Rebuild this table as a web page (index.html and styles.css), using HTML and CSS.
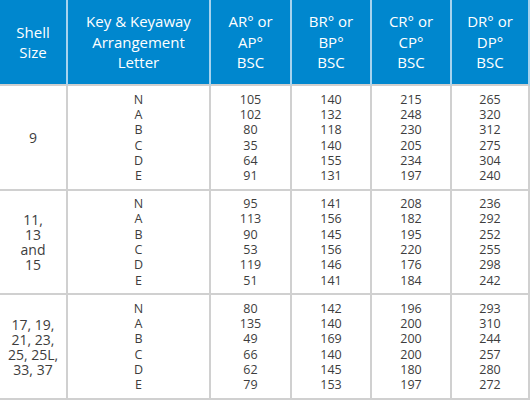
FILE: index.html
```html
<!DOCTYPE html>
<html>
<head>
<meta charset="utf-8">
<link rel="stylesheet" href="styles.css">
</head>
<body>
<div class="table">
  <div class="cell head">Shell<br>Size</div>
  <div class="cell head">Key &amp; Keyaway<br>Arrangement<br>Letter</div>
  <div class="cell head">AR° or<br>AP°<br>BSC</div>
  <div class="cell head">BR° or<br>BP°<br>BSC</div>
  <div class="cell head">CR° or<br>CP°<br>BSC</div>
  <div class="cell head">DR° or<br>DP°<br>BSC</div>

  <div class="cell shell">9</div>
  <div class="cell list">N<br>A<br>B<br>C<br>D<br>E</div>
  <div class="cell list">105<br>102<br>80<br>35<br>64<br>91</div>
  <div class="cell list">140<br>132<br>118<br>140<br>155<br>131</div>
  <div class="cell list">215<br>248<br>230<br>205<br>234<br>197</div>
  <div class="cell list">265<br>320<br>312<br>275<br>304<br>240</div>

  <div class="cell shell">11,<br>13<br>and<br>15</div>
  <div class="cell list">N<br>A<br>B<br>C<br>D<br>E</div>
  <div class="cell list">95<br>113<br>90<br>53<br>119<br>51</div>
  <div class="cell list">141<br>156<br>145<br>156<br>146<br>141</div>
  <div class="cell list">208<br>182<br>195<br>220<br>176<br>184</div>
  <div class="cell list">236<br>292<br>252<br>255<br>298<br>242</div>

  <div class="cell shell">17, 19,<br>21, 23,<br>25, 25L,<br>33, 37</div>
  <div class="cell list">N<br>A<br>B<br>C<br>D<br>E</div>
  <div class="cell list">80<br>135<br>49<br>66<br>62<br>79</div>
  <div class="cell list">142<br>140<br>169<br>140<br>145<br>153</div>
  <div class="cell list">196<br>200<br>200<br>200<br>180<br>197</div>
  <div class="cell list">293<br>310<br>244<br>257<br>280<br>272</div>
</div>
</body>
</html>
```

FILE: styles.css
```css
html, body {
  margin: 0;
  padding: 0;
  background: #ffffff;
}

body {
  font-family: "Open Sans", "Liberation Sans", sans-serif;
  color: #3d3d3d;
  width: 530px;
  height: 400px;
  overflow: hidden;
}

.table {
  display: grid;
  grid-template-columns: 68px 143px 81px 80px 80px 78px;
  grid-template-rows: 86px 105px 104px 105px;
}

.cell {
  box-sizing: border-box;
  border-right: 2px solid #d0d0d0;
  border-bottom: 2px solid #d0d0d0;
  display: flex;
  align-items: center;
  justify-content: center;
  text-align: center;
}

.head {
  background: #0087ce;
  color: #ffffff;
  font-size: 15px;
  line-height: 20.5px;
  border-right-color: #a6d3ef;
  border-bottom-color: #cfcfcf;
}

.shell {
  font-size: 14px;
  line-height: 15px;
}

.list {
  font-size: 12.5px;
  line-height: 15.3px;
}
```
